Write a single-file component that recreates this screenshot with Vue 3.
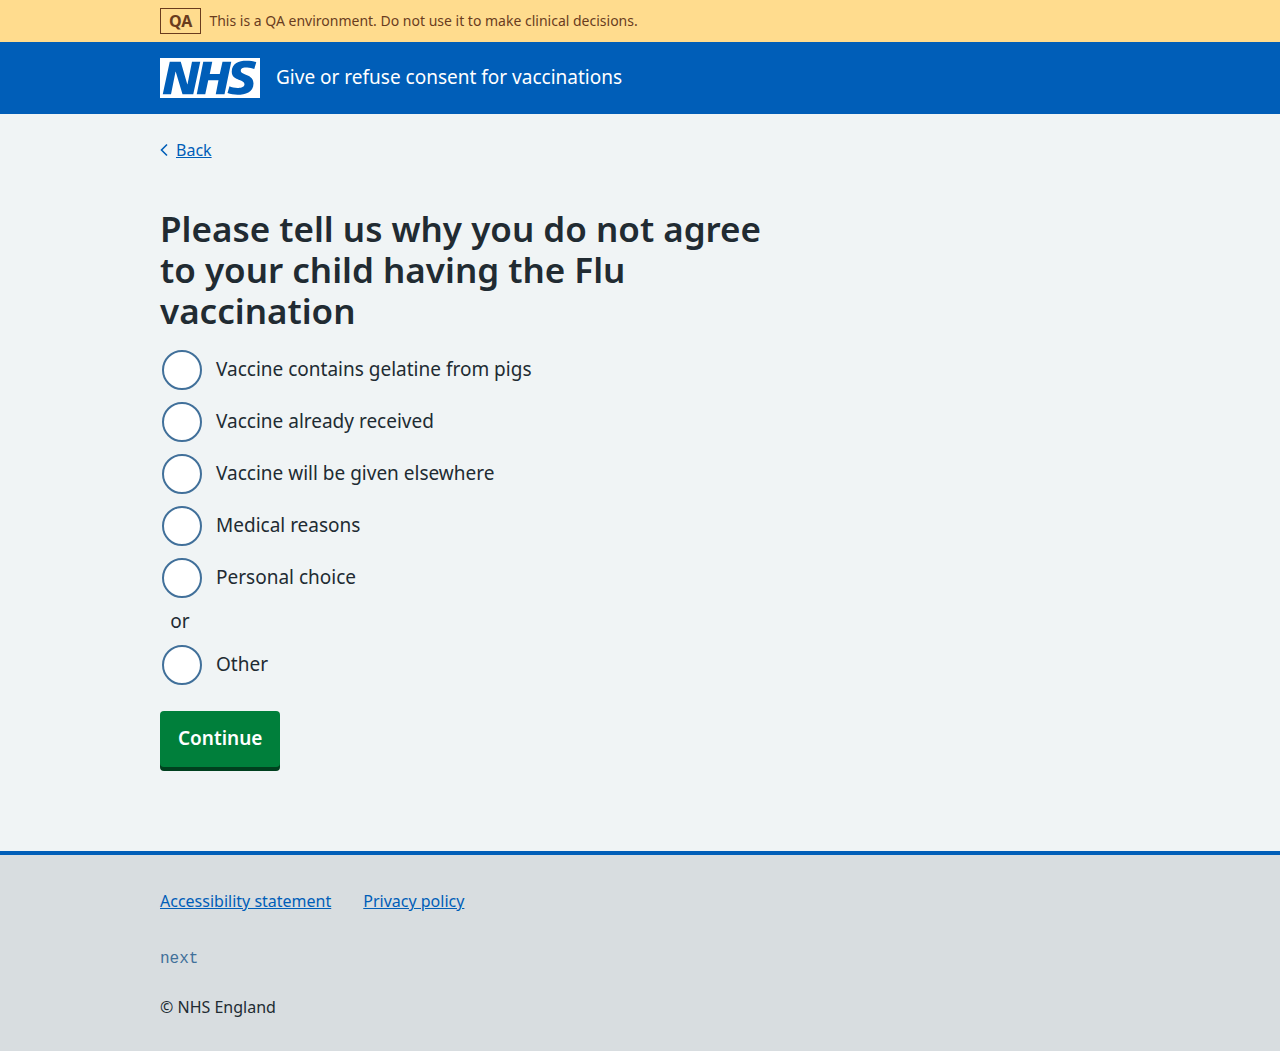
<script setup>
import { ref } from 'vue'

const reasons = [
  { value: 'contains_gelatine', label: 'Vaccine contains gelatine from pigs' },
  { value: 'already_vaccinated', label: 'Vaccine already received' },
  { value: 'will_be_vaccinated_elsewhere', label: 'Vaccine will be given elsewhere' },
  { value: 'medical_reasons', label: 'Medical reasons' },
  { value: 'personal_choice', label: 'Personal choice' },
]

const reason = ref('')
</script>

<template>
  <div class="page">
    <aside class="environment">
      <div class="container environment-inner">
        <strong class="tag">QA</strong>
        <span>This is a QA environment. Do not use it to make clinical decisions.</span>
      </div>
    </aside>

    <header class="header">
      <div class="container">
        <a class="service" href="#">
          <svg class="logo" viewBox="0 0 200 80" width="100" height="40" role="img" aria-label="NHS">
            <path
              fill="#fff"
              d="M200 0v80H0V0h200Zm-27.5 5.5c-14.5 0-29 5-29 22 0 10.2 7.7 13.5 14.7 16.3l.7.3c5.4 2 10.1 3.9 10.1 8.4 0 6.5-8.5 7.5-14 7.5s-12.5-1.5-16-3.5L135 70c5.5 2 13.5 3.5 20 3.5 15.5 0 32-4.5 32-22.5 0-19.5-25.5-16.5-25.5-25.5 0-5.5 5.5-6.5 12.5-6.5a35 35 0 0 1 14.5 3l4-13.5c-4.5-2-12-3-20-3Zm-131 2h-22l-14 65H22l9-45h.5l13.5 45h21.5l14-65H64l-9 45h-.5l-13-45Zm63 0h-18l-13 65h17l6-28H117l-5.5 28H129l13.5-65H125L119.5 32h-20l5-24.5Z"
            />
          </svg>
          <span class="service-name">Give or refuse consent for vaccinations</span>
        </a>
      </div>
    </header>

    <div class="content">
      <div class="container">
        <a class="back" href="#">
          <svg class="chevron" viewBox="0 0 8 14" width="8" height="14" aria-hidden="true">
            <path d="M7 1.5 1.5 7 7 12.5" fill="none" stroke="currentColor" stroke-width="1.6" />
          </svg>
          <span class="back-text">Back</span>
        </a>

        <main class="main">
          <form @submit.prevent>
            <fieldset class="fieldset">
              <legend class="legend">
                <h1 class="title">Please tell us why you do not agree to your child having the Flu vaccination</h1>
              </legend>
              <div class="radios">
                <div v-for="item in reasons" :key="item.value" class="radio">
                  <input :id="item.value" v-model="reason" class="radio-input" type="radio" name="reason" :value="item.value" />
                  <label class="radio-label" :for="item.value">{{ item.label }}</label>
                </div>
                <div class="divider">or</div>
                <div class="radio">
                  <input id="other" v-model="reason" class="radio-input" type="radio" name="reason" value="other" />
                  <label class="radio-label" for="other">Other</label>
                </div>
              </div>
            </fieldset>
            <button class="button" type="submit">Continue</button>
          </form>
        </main>
      </div>
    </div>

    <footer class="footer">
      <div class="container">
        <ul class="footer-links">
          <li><a class="link" href="#">Accessibility statement</a></li>
          <li><a class="link" href="#">Privacy policy</a></li>
        </ul>
        <p class="version">next</p>
        <p class="copyright">© NHS England</p>
      </div>
    </footer>
  </div>
</template>

<style>
body {
  margin: 0;
  background: #d8dde0;
}
</style>

<style scoped>
.page {
  color: #212b32;
  font-family: "Noto Sans", "Open Sans", Arial, sans-serif;
  font-size: 19px;
  line-height: 28px;
}

.container {
  max-width: 960px;
  margin: 0 auto;
}

.environment {
  padding: 8px 0;
  background: #ffdc8e;
  color: #6a3c1e;
  font-size: 14px;
  line-height: 26px;
}

.environment-inner {
  display: flex;
  align-items: center;
  gap: 8px;
}

.tag {
  padding: 0 8px;
  border: 1px solid currentColor;
  font-size: 16px;
  font-weight: 700;
  line-height: 24px;
}

.header {
  padding: 16px 0;
  background: #005eb8;
}

.service {
  display: flex;
  align-items: center;
  gap: 16px;
  color: #fff;
  text-decoration: none;
}

.service-name,
.radio-label {
  padding-bottom: 2px;
}

.logo {
  flex: none;
}

.content {
  padding: 24px 0 80px;
  background: #f0f4f5;
}

.back {
  display: inline-flex;
  align-items: center;
  gap: 8px;
  color: #005eb8;
  font-size: 16px;
  line-height: 24px;
  text-decoration: none;
  vertical-align: top;
}

.back-text {
  text-decoration: underline;
}

.main {
  max-width: 624px;
  padding-top: 42px;
}

.fieldset {
  min-width: 0;
  margin: 0;
  padding: 0;
  border: 0;
}

.legend {
  padding: 0;
}

.title {
  margin: 0 0 19px;
  font-size: 35px;
  font-weight: 600;
  line-height: 41px;
}

.radio {
  display: flex;
  align-items: center;
  gap: 14px;
  margin-bottom: 12px;
  padding-left: 2px;
}

.radio-input {
  appearance: none;
  flex: none;
  width: 40px;
  height: 40px;
  margin: 0;
  border: 2px solid #41709a;
  border-radius: 50%;
  background: #fff;
}

.radio-input:checked {
  background: radial-gradient(circle, #212b32 10px, #fff 11px);
}

.radio-input:focus-visible {
  border-color: #212b32;
  outline: 4px solid #ffeb3b;
}

.divider {
  width: 40px;
  margin: -3px 0 10px;
  text-align: center;
}

.button {
  margin: 14px 0 4px;
  padding: 13px 18px 15px;
  border: 0;
  border-radius: 4px;
  background: #007f3b;
  box-shadow: 0 4px 0 #00401e;
  color: #fff;
  font: inherit;
  font-weight: 600;
  vertical-align: top;
  cursor: pointer;
}

.footer {
  padding: 34px 0 32px;
  border-top: 4px solid #005eb8;
  background: #d8dde0;
  font-size: 16px;
  line-height: 24px;
}

.footer-links {
  display: flex;
  flex-wrap: wrap;
  gap: 32px;
  margin: 0 0 34px;
  padding: 0;
  list-style: none;
}

.link {
  color: #005eb8;
}

.version {
  margin: 0 0 24px;
  color: #41709a;
  font-family: "Liberation Mono", monospace;
}

.copyright {
  margin: 0;
}

@media (max-width: 1024px) {
  .container {
    margin: 0 32px;
  }
}
</style>
